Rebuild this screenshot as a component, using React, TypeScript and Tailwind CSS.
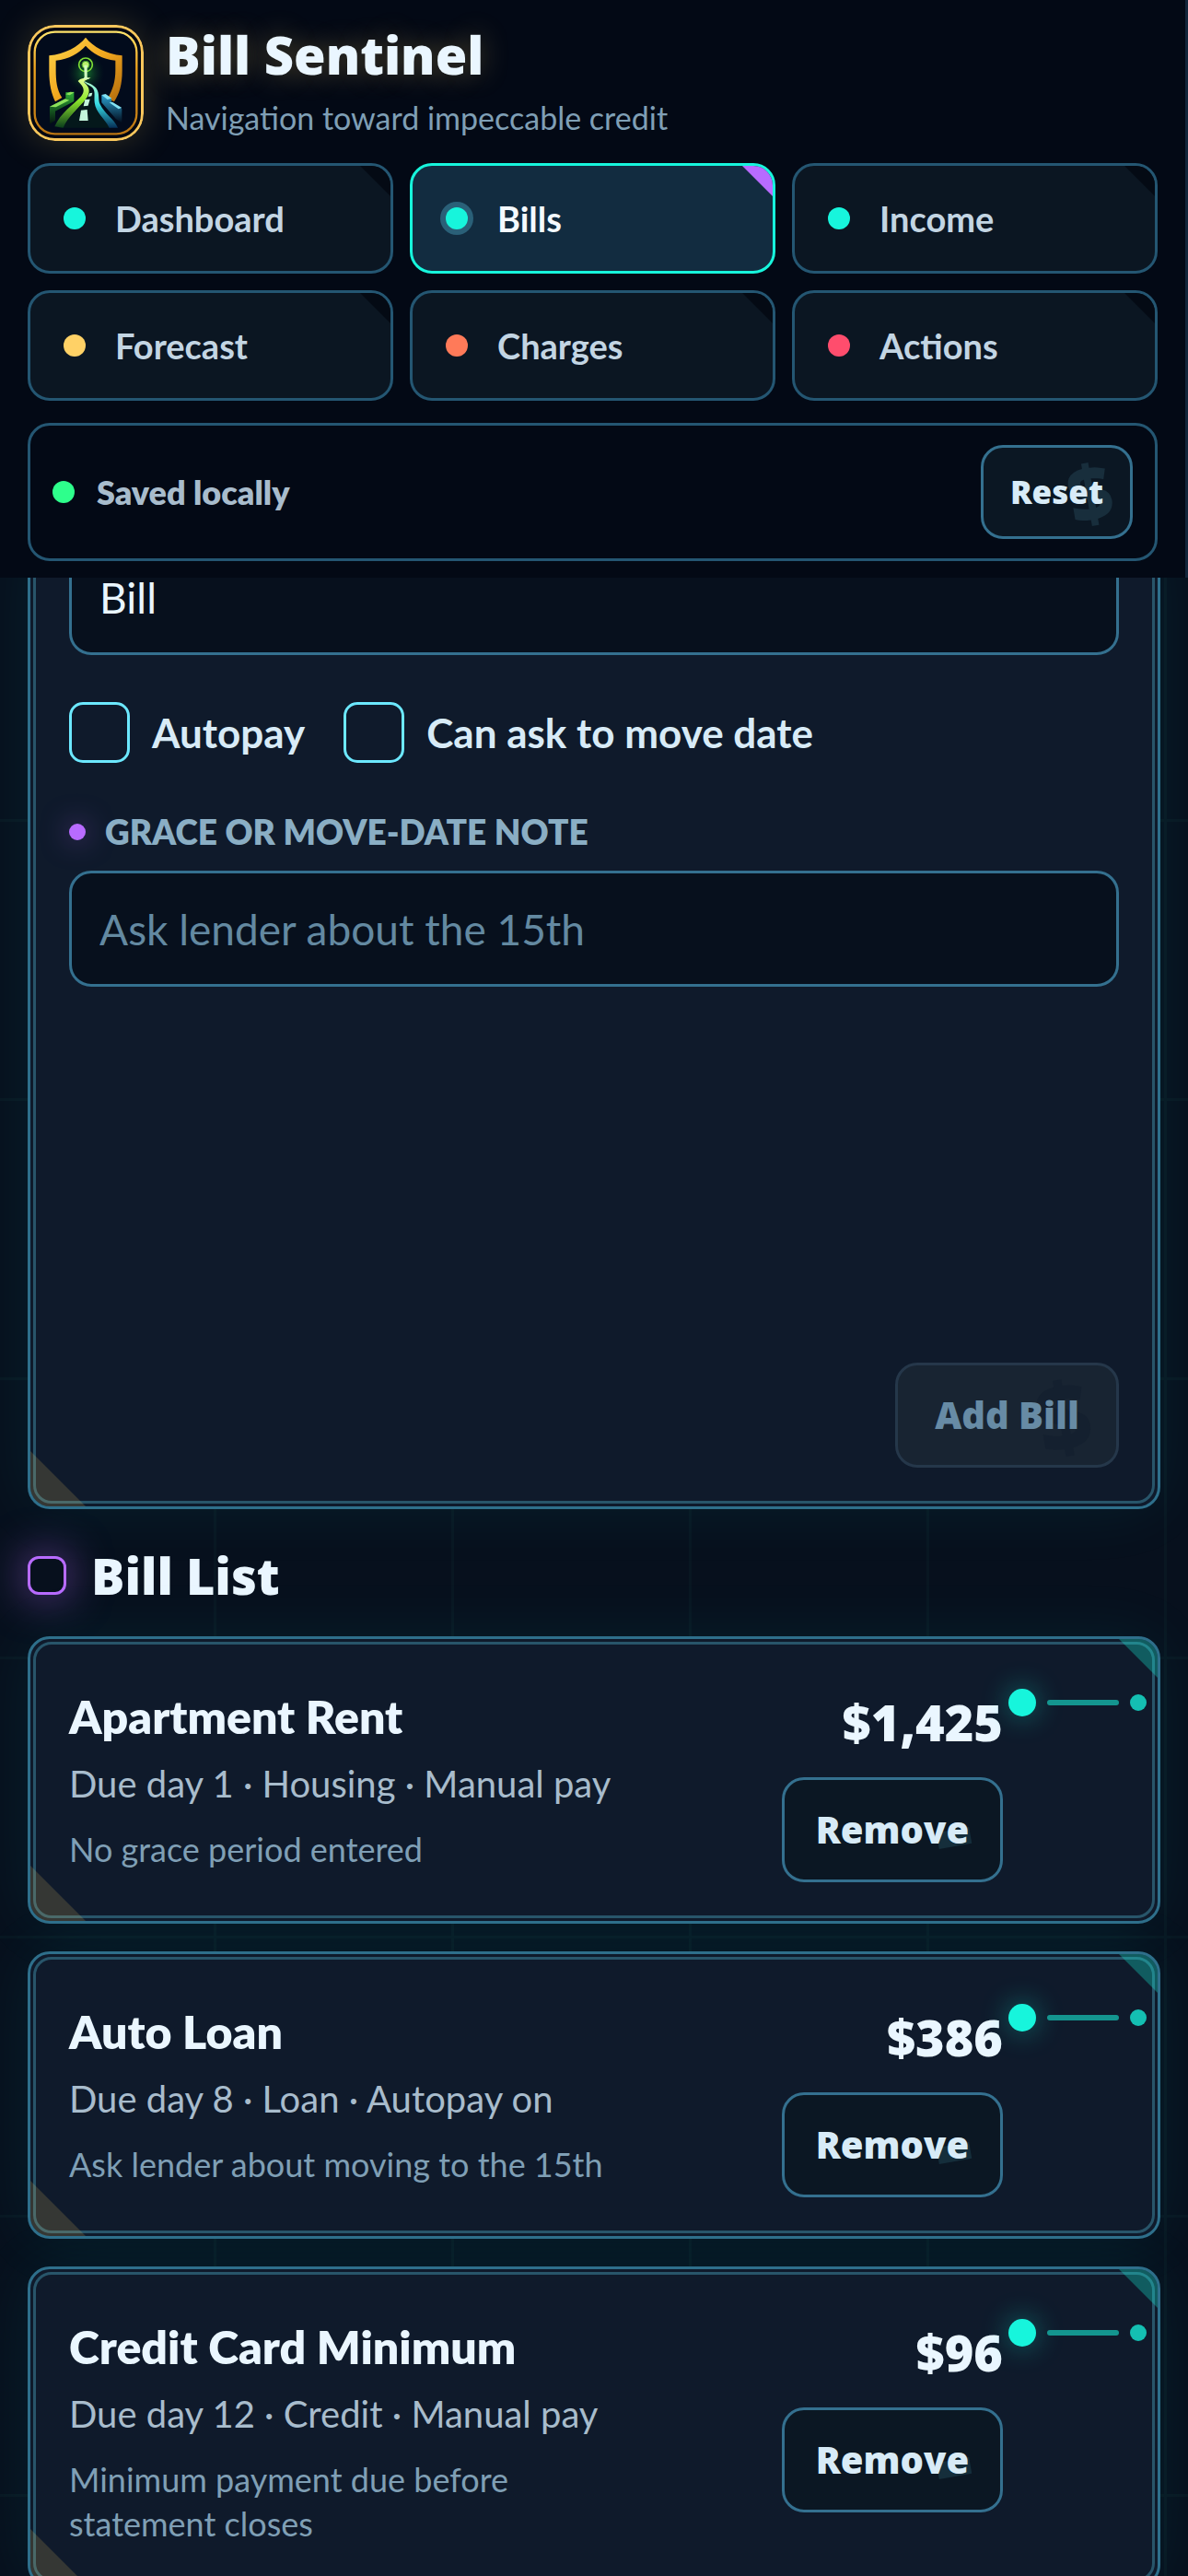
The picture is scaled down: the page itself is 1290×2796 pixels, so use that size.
import { useState } from 'react';

type Tab = { label: string; dot: string };

const TABS: Tab[] = [
  { label: 'Dashboard', dot: 'bg-[#17f5dc]' },
  { label: 'Bills', dot: 'bg-[#17f5dc]' },
  { label: 'Income', dot: 'bg-[#17f5dc]' },
  { label: 'Forecast', dot: 'bg-[#ffd166]' },
  { label: 'Charges', dot: 'bg-[#ff7a59]' },
  { label: 'Actions', dot: 'bg-[#ff4d6d]' },
];

interface Bill {
  name: string;
  detail: string;
  note: string;
  amount: string;
}

const BILLS: Bill[] = [
  {
    name: 'Apartment Rent',
    detail: 'Due day 1 · Housing · Manual pay',
    note: 'No grace period entered',
    amount: '$1,425',
  },
  {
    name: 'Auto Loan',
    detail: 'Due day 8 · Loan · Autopay on',
    note: 'Ask lender about moving to the 15th',
    amount: '$386',
  },
  {
    name: 'Credit Card Minimum',
    detail: 'Due day 12 · Credit · Manual pay',
    note: 'Minimum payment due before statement closes',
    amount: '$96',
  },
];

// Heaviest face, for headings, amounts and button labels
const HEAVY = "font-['Open_Sans','Lato',sans-serif] font-extrabold";

function Logo() {
  return (
    <svg viewBox="90 81 378 378" className="size-[126px] shrink-0 rounded-[30px] shadow-[0_0_42px_rgba(255,209,102,0.2)]" aria-hidden>
      <defs>
        <linearGradient id="gold" x1="0" y1="0" x2="0" y2="1">
          <stop offset="0" stopColor="#ffe26a" />
          <stop offset="0.35" stopColor="#f0a51e" />
          <stop offset="1" stopColor="#b97412" />
        </linearGradient>
        <linearGradient id="shield" x1="0" y1="0" x2="1" y2="1">
          <stop offset="0" stopColor="#ffd84e" />
          <stop offset="0.5" stopColor="#f2a81f" />
          <stop offset="1" stopColor="#b06a0c" />
        </linearGradient>
        <linearGradient id="laneLeft" x1="0" y1="0" x2="0" y2="1">
          <stop offset="0" stopColor="#e9ff9a" />
          <stop offset="0.45" stopColor="#8ee82c" />
          <stop offset="1" stopColor="#0b3d1c" />
        </linearGradient>
        <linearGradient id="laneRight" x1="0" y1="0" x2="0" y2="1">
          <stop offset="0" stopColor="#b9ffd0" />
          <stop offset="0.5" stopColor="#35dbe4" />
          <stop offset="1" stopColor="#063058" />
        </linearGradient>
        <linearGradient id="wallLeft" x1="0" y1="0" x2="0" y2="1">
          <stop offset="0" stopColor="#2fae37" />
          <stop offset="1" stopColor="#03140f" />
        </linearGradient>
        <linearGradient id="wallRight" x1="0" y1="0" x2="0" y2="1">
          <stop offset="0" stopColor="#2b9fd0" />
          <stop offset="1" stopColor="#020c1c" />
        </linearGradient>
        <radialGradient id="beacon">
          <stop offset="0" stopColor="#1d9a35" stopOpacity="0.75" />
          <stop offset="1" stopColor="#06251c" stopOpacity="0" />
        </radialGradient>
      </defs>
      <rect x="94.500" y="85.500" width="369" height="369" rx="84" fill="#020711" stroke="#f9c75c" strokeWidth="9" />
      <rect x="113" y="104" width="332" height="332" rx="66" fill="#020b1c" stroke="url(#gold)" strokeWidth="7" />
      <path
        d="M279 122 C303 152 346 176 398 181 V230 C398 275 389 305 372 331 L350 322 C368 292 376 264 376 229 V197 C333 192 301 174 279 149 C257 174 225 192 182 197 V229 C182 264 185 292 202 318 L180 331 C168 305 160 275 160 230 V181 C212 176 255 152 279 122Z"
        fill="url(#shield)"
      />
      <ellipse cx="279" cy="238" rx="62" ry="64" fill="url(#beacon)" />
      <path d="M162 347 L214 322 V301 L241 299 V330 L180 362 V392 L162 404Z" fill="url(#wallLeft)" />
      <path d="M162 347 L212 322 L226 326 L182 349Z M214 307 L229 299 L242 301 L227 310Z" fill="#8be05a" />
      <path d="M331 309 L363 322 V334 L397 354 V400 L378 388 L331 334Z" fill="url(#wallRight)" />
      <path d="M331 309 L344 306 L364 320 L350 324Z M356 334 L366 332 L397 351 L386 355Z" fill="#83e2f3" />
      <path d="M266 262 C300 282 306 300 304 326 C308 360 338 390 364 416 H192 C232 380 288 330 286 290Z" fill="#04181b" />
      <path d="M254 264 C262 254 276 254 296 252 C278 264 270 262 276 270 C294 286 294 302 280 322 C256 354 222 378 206 416 L178 412 C196 368 240 340 264 314 C278 296 274 284 254 264Z" fill="url(#laneLeft)" />
      <path d="M272 263 C286 270 304 274 314 288 C326 306 318 324 326 340 C340 370 372 388 384 416 H356 C340 384 312 368 308 334 C306 310 312 296 300 284 C290 276 278 272 272 263Z" fill="url(#laneRight)" />
      <path d="M291 304 L301 302 L298 313 L287 315Z M277 324 L293 323 L287 344 L272 346Z M264 359 L284 357 L287 393 H258Z" fill="#c4f5dc" />
      <circle cx="279" cy="211" r="22" fill="none" stroke="#7ede35" strokeWidth="5" />
      <circle cx="279" cy="211" r="12" fill="#b8f06c" stroke="#3e9a2c" strokeWidth="3" />
      <path d="M274 212 H284 V252 L292 258 H270 L275 251Z" fill="#d5ffc1" />
    </svg>
  );
}

// Faint currency mark tucked behind a button label
function ButtonMark({ className }: { className: string }) {
  return (
    <span aria-hidden className={`pointer-events-none absolute inset-y-0 flex -rotate-10 items-center leading-none ${className}`}>
      $
    </span>
  );
}

function CardTrim({ top }: { top?: boolean }) {
  return (
    <>
      <span className="pointer-events-none absolute inset-[3px] rounded-[20px] border-[3px] border-[#28556a]" />
      {top && (
        <span className="absolute top-0 right-0 size-[42px] bg-[#17f5dc]/30 [clip-path:polygon(0_0,100%_0,100%_100%)]" />
      )}
      <span className="absolute bottom-0 left-0 size-[60px] bg-[#ffd166]/16 [clip-path:polygon(0_0,100%_100%,0_100%)]" />
    </>
  );
}

function BillCard({ bill, onRemove }: { bill: Bill; onRemove: () => void }) {
  return (
    <article className="relative flex min-h-[312px] items-start justify-between overflow-hidden rounded-3xl border-[3px] border-[#2e6f8b] bg-[#0f1a2b] py-[42px] pr-3 pl-[42px]">
      <CardTrim top />
      <div className="max-w-[620px] pt-3">
        <h3 className="text-[50px] leading-[60px] font-extrabold text-[#eaf6ff]">{bill.name}</h3>
        <p className="mt-[15px] text-[40px] leading-[57px] text-[#a8bccc]">{bill.detail}</p>
        <p className="mt-[18px] text-[36px] leading-[48px] text-[#7f9fb5]">{bill.note}</p>
      </div>
      <div className="flex items-start gap-1.5">
        <div className="flex flex-col items-end gap-6 pt-3">
          <strong className={`text-[54px] leading-[72px] text-[#eaf6ff] ${HEAVY}`}>{bill.amount}</strong>
          <button
            type="button"
            onClick={onRemove}
            className={`relative h-[114px] w-[240px] overflow-hidden rounded-3xl border-[3px] border-[#34708f] bg-[#0b1723] text-[40px] text-[#d8ebf7] ${HEAVY}`}
          >
            <span aria-hidden className="absolute top-[54px] right-8 h-[18px] w-[36px] -rotate-10 bg-[#152e3b]" />
            <span className="relative">Remove</span>
          </button>
        </div>
        <div className="flex items-center gap-3 pt-3" aria-hidden>
          <span className="size-[30px] rounded-full bg-[#17f5dc] shadow-[0_0_30px_rgba(23,245,220,0.4)]" />
          <span className="h-1.5 w-[78px] rounded-full bg-[#14958f]" />
          <span className="size-[18px] rounded-full bg-[#14bfb2]" />
        </div>
      </div>
    </article>
  );
}

export default function App() {
  const [active, setActive] = useState('Bills');
  const [bills, setBills] = useState(BILLS);
  const [kind, setKind] = useState('Bill');
  const [note, setNote] = useState('');

  return (
    <div className="h-screen overflow-hidden bg-[#07101d] bg-[linear-gradient(to_right,#091722_3px,transparent_3px),linear-gradient(to_bottom,#091722_3px,transparent_3px)] bg-[size:258px_303px] bg-[position:232px_283px] font-['Lato','Open_Sans',sans-serif]">
      <header className="relative z-10 border-r-[3px] border-[#13263b] bg-[#030915] px-[30px] pt-[27px] pb-[18px]">
        <div className="flex items-center gap-6">
          <Logo />
          <div>
            <h1 className={`text-[56px] leading-[60px] text-[#eaf6ff] [text-shadow:0_0_30px_rgba(255,209,102,0.3)] ${HEAVY}`}>Bill Sentinel</h1>
            <p className="mt-[15px] text-[34px] leading-[48px] text-[#7f9fb5]">Navigation toward impeccable credit</p>
          </div>
        </div>

        <nav className="mt-6 grid grid-cols-3 gap-[18px]">
          {TABS.map((tab) => {
            const on = tab.label === active;
            return (
              <button
                key={tab.label}
                type="button"
                onClick={() => setActive(tab.label)}
                className={`relative flex h-[120px] items-center gap-8 overflow-hidden rounded-3xl border-[3px] pl-9 text-[38px] font-bold ${
                  on ? 'border-[#17f5dc] bg-[#122c40] text-[#f4faff]' : 'border-[#245672] bg-[#0b1622] text-[#c3d5e3]'
                }`}
              >
                <span className={`size-6 rounded-full ${tab.dot} ${on ? 'ring-6 ring-[#2a6078]' : ''}`} />
                {tab.label}
                <span
                  className={`absolute top-0 right-0 size-[33px] [clip-path:polygon(0_0,100%_0,100%_100%)] ${on ? 'bg-[#b86bff]' : 'bg-[#040a14]'}`}
                />
              </button>
            );
          })}
        </nav>

        <div className="mt-6 flex items-center justify-between rounded-3xl border-[3px] border-[#245672] px-6 py-[21px]">
          <p className="flex items-center gap-6 text-[36px] font-extrabold text-[#a8bccc]">
            <span className="size-6 rounded-full bg-[#2eff8c]" />
            Saved locally
          </p>
          <button
            type="button"
            onClick={() => setBills(BILLS)}
            className={`relative h-[102px] w-[165px] overflow-hidden rounded-3xl border-[3px] border-[#34708f] bg-[#0b1723] text-[35px] text-[#d8ebf7] ${HEAVY}`}
          >
            <ButtonMark className="right-5 text-[84px] text-[#182e3c]" />
            <span className="relative">Reset</span>
          </button>
        </div>
      </header>

      <main className="-mt-[42px] px-[30px]">
        <form
          className="relative flex min-h-[1053px] flex-col overflow-hidden rounded-b-3xl border-[3px] border-t-0 border-[#2e6f8b] bg-[#0f1a2b] px-[42px] pb-[42px] shadow-[0_0_72px_rgba(23,245,220,0.07)]"
          onSubmit={(e) => e.preventDefault()}
        >
          <CardTrim />
          <input
            aria-label="Bill type"
            value={kind}
            onChange={(e) => setKind(e.target.value)}
            className="h-[126px] w-full rounded-3xl border-[3px] border-[#34708f] bg-[#07101d] px-[30px] text-[46px] text-[#eaf6ff]"
          />
          <div className="mt-[51px] flex items-center gap-[42px] text-[44px] font-bold text-[#d8ebf7]">
            <label className="flex items-center gap-6">
              <input type="checkbox" className="size-[66px] appearance-none rounded-[15px] border-[3px] border-[#6ce8ff] checked:bg-[#6ce8ff]" />
              Autopay
            </label>
            <label className="flex items-center gap-6">
              <input type="checkbox" className="size-[66px] appearance-none rounded-[15px] border-[3px] border-[#6ce8ff] checked:bg-[#6ce8ff]" />
              Can ask to move date
            </label>
          </div>
          <label htmlFor="note" className="mt-[51px] flex items-center gap-[21px] text-[37px] leading-[48px] font-extrabold text-[#8aaec4] uppercase">
            <span className="size-[18px] rounded-full bg-[#b86bff] shadow-[0_0_30px_rgba(184,107,255,0.5)]" />
            Grace or move-date note
          </label>
          <input
            id="note"
            value={note}
            onChange={(e) => setNote(e.target.value)}
            placeholder="Ask lender about the 15th"
            className="mt-[18px] h-[126px] w-full rounded-3xl border-[3px] border-[#34708f] bg-[#07101d] px-[30px] text-[46px] text-[#eaf6ff] placeholder:text-[#6389a1]"
          />
          <button
            type="submit"
            disabled
            className={`relative mt-auto h-[114px] w-[243px] self-end overflow-hidden rounded-3xl border-[3px] border-[#25374a] bg-[#182432] text-[40px] text-[#678ba5] ${HEAVY}`}
          >
            <ButtonMark className="right-7 text-[102px] text-[#14202f]" />
            <span className="relative">Add Bill</span>
          </button>
        </form>

        <h2 className={`mt-9 flex items-center gap-[27px] text-[54px] leading-[72px] text-[#eaf6ff] ${HEAVY}`}>
          <span className="size-[42px] rounded-xl border-[3px] border-[#b86bff] bg-[#07101d] shadow-[0_0_48px_rgba(184,107,255,0.6)]" />
          Bill List
        </h2>

        <div className="mt-[30px] flex flex-col gap-[30px]">
          {bills.map((bill) => (
            <div key={bill.name} className="rounded-3xl shadow-[0_0_72px_rgba(23,245,220,0.07)]">
              <BillCard bill={bill} onRemove={() => setBills(bills.filter((b) => b !== bill))} />
            </div>
          ))}
        </div>
      </main>
    </div>
  );
}
